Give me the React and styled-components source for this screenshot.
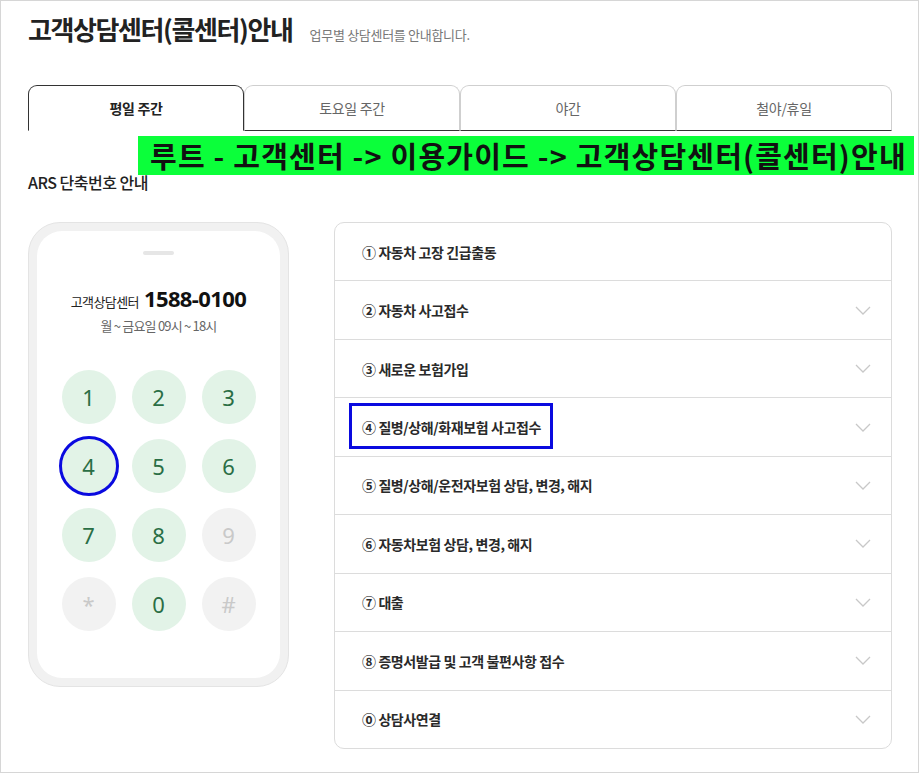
import React from 'react'
import styled, {createGlobalStyle} from 'styled-components'

const GlobalStyle = createGlobalStyle`
  html, body {
    margin: 0;
    padding: 0;
    background: #fff;
  }
  body {
    font-family: "Noto Sans CJK KR", "Noto Sans", sans-serif;
    color: #222;
  }
  * { box-sizing: border-box; }
`

const Frame = styled.div`
  position: relative;
  width: 919px;
  height: 773px;
  border: 1px solid #d6d6d6;
  padding: 0 0 0 27px;
  overflow: hidden;
`

const Header = styled.header`
  display: flex;
  align-items: baseline;
  gap: 17px;
  margin-top: 10px;
`

const Title = styled.h1`
  margin: 0;
  font-size: 26px;
  line-height: 36px;
  font-weight: 700;
  letter-spacing: -1.4px;
  color: #222;
`

const Subtitle = styled.span`
  font-size: 13px;
  letter-spacing: -0.3px;
  color: #777;
`

const Tabs = styled.div`
  display: grid;
  grid-template-columns: repeat(4, 1fr);
  width: 864px;
  margin-top: 38px;
`

const Tab = styled.div`
  height: 46px;
  display: flex;
  align-items: center;
  justify-content: center;
  font-size: 14px;
  border: 1px solid ${p => p.active ? '#333' : '#cfcfcf'};
  border-bottom: 1px solid ${p => p.active ? 'transparent' : '#333'};
  border-radius: 9px 9px 0 0;
  font-weight: ${p => p.active ? 700 : 400};
  color: ${p => p.active ? '#222' : '#666'};
  letter-spacing: -0.3px;
`

const Banner = styled.div`
  position: absolute;
  left: 137px;
  top: 135px;
  width: 776px;
  height: 39px;
  background: #0bff3a;
  color: #111;
  font-size: 29px;
  font-weight: 700;
  line-height: 39px;
  padding-left: 12px;
  letter-spacing: 1.2px;
  white-space: nowrap;
`

const SectionTitle = styled.h2`
  margin: 40px 0 0;
  font-size: 16px;
  line-height: 22px;
  font-weight: 500;
  letter-spacing: -0.5px;
  color: #222;
`

const Content = styled.div`
  display: flex;
  align-items: flex-start;
  gap: 45px;
  margin-top: 29px;
`

const Phone = styled.div`
  width: 261px;
  height: 465px;
  padding: 8px;
  background: #f1f1f1;
  border: 1px solid #e4e4e4;
  border-radius: 32px;
`

const Screen = styled.div`
  height: 100%;
  background: #fff;
  border-radius: 25px;
  display: flex;
  flex-direction: column;
  align-items: center;
  padding-top: 20px;
`

const Notch = styled.div`
  width: 31px;
  height: 4px;
  border-radius: 2px;
  background: #e6e6e6;
`

const CallLine = styled.div`
  margin-top: 28px;
  display: flex;
  align-items: baseline;
  gap: 5px;
  line-height: 30px;
`

const CallLabel = styled.span`
  font-size: 13px;
  letter-spacing: -0.6px;
  color: #222;
`

const CallNumber = styled.span`
  font-family: "Noto Sans", sans-serif;
  font-size: 22px;
  font-weight: 700;
  letter-spacing: -0.6px;
  color: #111;
`

const Hours = styled.div`
  font-size: 13px;
  line-height: 18px;
  letter-spacing: -0.8px;
  color: #666;
`

const Keypad = styled.div`
  display: grid;
  grid-template-columns: repeat(3, 54px);
  column-gap: 16px;
  row-gap: 15px;
  margin-top: 35px;
`

const Key = styled.div`
  width: 54px;
  height: 54px;
  border-radius: 50%;
  display: flex;
  align-items: center;
  justify-content: center;
  font-family: "Noto Sans", sans-serif;
  font-size: 22px;
  background: ${p => p.off ? '#f2f2f2' : '#e2f3e7'};
  color: ${p => p.off ? '#c9c9c9' : '#2a6e45'};
  outline: ${p => p.marked ? '3px solid #0a0adf' : 'none'};
`

const List = styled.div`
  width: 558px;
  height: 527px;
  border: 1px solid #dcdcdc;
  border-radius: 10px;
  display: flex;
  flex-direction: column;
  overflow: hidden;
`

const Row = styled.div`
  flex: 1;
  display: flex;
  align-items: center;
  justify-content: space-between;
  padding: 0 20px 0 27px;
  & + & { border-top: 1px solid #dcdcdc; }
`

const RowLabel = styled.span`
  position: relative;
  font-size: 14px;
  line-height: 20px;
  font-weight: 700;
  letter-spacing: -0.4px;
  color: #2a2a2a;
  &::after {
    content: '';
    display: ${p => p.marked ? 'block' : 'none'};
    position: absolute;
    left: -13px;
    right: -12px;
    top: -14px;
    bottom: -12px;
    border: 3px solid #0a0adf;
  }
`

const Chevron = () => (
  <svg width="16" height="9" viewBox="0 0 16 9" fill="none">
    <polyline points="1,1 8,8 15,1" stroke="#c8c8c8" strokeWidth="1.3" />
  </svg>
)

const tabs = ['평일 주간', '토요일 주간', '야간', '철야/휴일']
const keys = [
  {k:'1'}, {k:'2'}, {k:'3'},
  {k:'4', marked:true}, {k:'5'}, {k:'6'},
  {k:'7'}, {k:'8'}, {k:'9', off:true},
  {k:'*', off:true}, {k:'0'}, {k:'#', off:true},
]
const items = [
  {t:'① 자동차 고장 긴급출동', open:true},
  {t:'② 자동차 사고접수'},
  {t:'③ 새로운 보험가입'},
  {t:'④ 질병/상해/화재보험 사고접수', marked:true},
  {t:'⑤ 질병/상해/운전자보험 상담, 변경, 해지'},
  {t:'⑥ 자동차보험 상담, 변경, 해지'},
  {t:'⑦ 대출'},
  {t:'⑧ 증명서발급 및 고객 불편사항 접수'},
  {t:'⓪ 상담사연결'},
]

export default function App() {
  return (
    <>
      <GlobalStyle />
      <Frame>
        <Header>
          <Title>고객상담센터(콜센터)안내</Title>
          <Subtitle>업무별 상담센터를 안내합니다.</Subtitle>
        </Header>
        <Tabs>
          {tabs.map((t, i) => <Tab key={t} active={i === 0}>{t}</Tab>)}
        </Tabs>
        <Banner>루트 - 고객센터 -&gt; 이용가이드 -&gt; 고객상담센터(콜센터)안내</Banner>
        <SectionTitle>ARS 단축번호 안내</SectionTitle>
        <Content>
          <Phone>
            <Screen>
              <Notch />
              <CallLine>
                <CallLabel>고객상담센터</CallLabel>
                <CallNumber>1588-0100</CallNumber>
              </CallLine>
              <Hours>월 ~ 금요일 09시 ~ 18시</Hours>
              <Keypad>
                {keys.map(({k, off, marked}) =>
                  <Key key={k} off={off} marked={marked}>{k}</Key>
                )}
              </Keypad>
            </Screen>
          </Phone>
          <List>
            {items.map(({t, open, marked}) =>
              <Row key={t}>
                <RowLabel marked={marked}>{t}</RowLabel>
                {!open && <Chevron />}
              </Row>
            )}
          </List>
        </Content>
      </Frame>
    </>
  )
}
